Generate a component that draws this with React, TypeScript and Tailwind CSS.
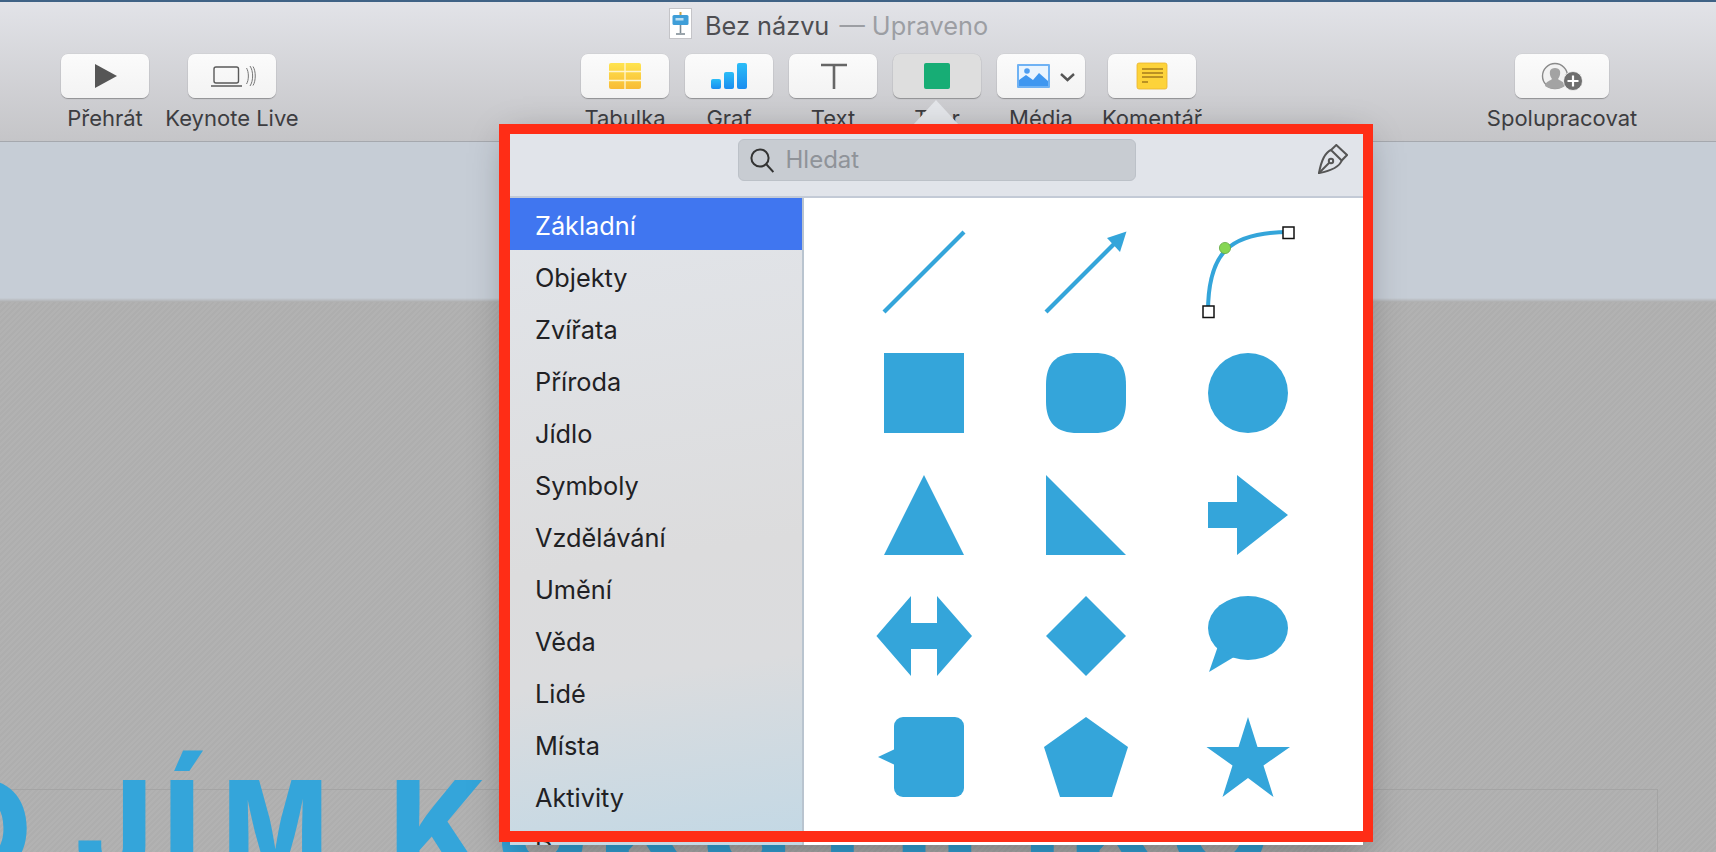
import React from "react";

const BLUE = "#34a5da";

function ToolButton({ label, width = "w-[88px]", active = false, vb = "0 0 88 44", children, className = "" }: { label: string; width?: string; active?: boolean; vb?: string; children: React.ReactNode; className?: string }) {
  return (
    <div className={`flex flex-col items-center ${width} ${className}`}>
      <div className={`h-[44px] w-full rounded-[7px] shadow-[0_1px_1px_rgba(0,0,0,0.28),0_0_0_0.5px_rgba(0,0,0,0.06)] ${active ? "bg-[#dedede]" : "bg-gradient-to-b from-[#fbfbfb] to-[#f3f3f3]"}`}>
        <svg viewBox={vb} className="block h-full w-full">{children}</svg>
      </div>
      <div className="mt-[7px] whitespace-nowrap text-[22px] leading-[26px] text-[#3d3d41]">{label}</div>
    </div>
  );
}

function Shape({ children }: { children: React.ReactNode }) {
  return (
    <div className="flex items-center justify-center">
      <svg viewBox="0 0 100 100" className="block h-[100px] w-[100px]" fill={BLUE}>{children}</svg>
    </div>
  );
}

const categories = ["Objekty", "Zvířata", "Příroda", "Jídlo", "Symboly", "Vzdělávání", "Umění", "Věda", "Lidé", "Místa", "Aktivity", "Doprava"];

export default function App() {
  return (
    <div className="relative flex h-[852px] w-[1716px] flex-col overflow-hidden bg-[#c6cdd6] font-['Inter',sans-serif]">
      <div className="h-[2px] bg-[#3f6285]" />
      <header className="h-[140px] border-b border-[#a5a8ae] bg-gradient-to-b from-[#e2e3e8] to-[#c5c5c8]">
        <div className="flex h-[52px] items-start pl-[669px] pt-[6px]">
          <svg viewBox="0 0 23 31" className="h-[31px] w-[23px]">
            <rect x="0.5" y="0.5" width="22" height="30" fill="#fff" stroke="#c4c4c8" />
            <rect x="3.5" y="7" width="16" height="10" rx="1.5" fill="#3f9ed8" />
            <rect x="6.5" y="10" width="8" height="2.5" fill="#bfe0f2" />
            <rect x="10.5" y="4" width="2" height="3" fill="#c9a24a" />
            <path d="M11.5 17V25" stroke="#7c8a94" strokeWidth="1.6" />
            <path d="M7 26h9" stroke="#9aa4ab" strokeWidth="2" />
          </svg>
          <div className="ml-[13px] whitespace-nowrap text-[25.3px] leading-[36px] text-[#4e4e52]">
            Bez názvu <span className="ml-[3px] text-[#9c9ea3]">— Upraveno</span>
          </div>
        </div>
        <div className="flex pl-[61px]">
          <ToolButton label="Přehrát">
            <path d="M34 10V34L56 22Z" fill="#565656" />
          </ToolButton>
          <ToolButton label="Keynote Live" className="ml-[39px]">
            <rect x="26" y="13" width="24.5" height="16" rx="2" fill="none" stroke="#5a5a5a" strokeWidth="1.4" />
            <path d="M23 32H54" stroke="#5a5a5a" strokeWidth="1.5" />
            <path d="M58.5 14C61 18 61 26 58.5 30M62 12C65.5 17 65.5 27 62 32M65 12.5C68 17 68 27 65 31.5" fill="none" stroke="#777" strokeWidth="1" />
          </ToolButton>
          <div className="ml-[305px] flex gap-4">
            <ToolButton label="Tabulka">
              <defs>
                <linearGradient id="ty" x1="0" y1="0" x2="0" y2="1">
                  <stop offset="0" stopColor="#ffe44f" />
                  <stop offset="1" stopColor="#f8bb35" />
                </linearGradient>
              </defs>
              <rect x="28" y="9" width="32" height="26" rx="2" fill="url(#ty)" />
              <path d="M44 9V35M28 17.5H60M28 26.5H60" stroke="#fff6d0" strokeWidth="1.3" />
            </ToolButton>
            <ToolButton label="Graf">
              <defs>
                <linearGradient id="tb" x1="0" y1="0" x2="0" y2="1">
                  <stop offset="0" stopColor="#2bbdf7" />
                  <stop offset="1" stopColor="#1a8df0" />
                </linearGradient>
              </defs>
              <rect x="26" y="25" width="10" height="10" rx="2" fill="url(#tb)" />
              <rect x="39" y="18" width="10" height="17" rx="2" fill="url(#tb)" />
              <rect x="52" y="9" width="10" height="26" rx="2" fill="url(#tb)" />
            </ToolButton>
            <ToolButton label="Text">
              <path d="M32 11H58M45 11V35" stroke="#666" strokeWidth="2.6" fill="none" />
            </ToolButton>
            <ToolButton label="Tvar" active>
              <rect x="31" y="9" width="26" height="26" rx="2" fill="#17ad75" />
            </ToolButton>
            <ToolButton label="Média">
              <rect x="20" y="10" width="33" height="24" rx="1" fill="#6fb2f4" />
              <rect x="22" y="12" width="29" height="20" fill="#e9f4fe" />
              <circle cx="30" cy="17" r="2.8" fill="#4d9df0" />
              <path d="M22 32V26L29 21L36 26L42 19L51 27V32Z" fill="#3f97f0" />
              <path d="M64 20L70.5 26L77 20" fill="none" stroke="#555" strokeWidth="2.4" />
            </ToolButton>
            <ToolButton label="Komentář" className="ml-[7px]">
              <rect x="29" y="9" width="30" height="26" rx="2" fill="#fdd33a" stroke="#eab42c" strokeWidth="0.8" />
              <path d="M34 15H55M34 19H55M34 23H55" stroke="#a57c1c" strokeWidth="1.5" />
              <path d="M34 28H40" stroke="#a57c1c" strokeWidth="1.5" />
            </ToolButton>
          </div>
          <ToolButton label="Spolupracovat" width="w-[94px]" vb="0 0 94 44" className="ml-[319px]">
            <circle cx="40" cy="22" r="12.5" fill="#f2f2f2" stroke="#8a8a8a" strokeWidth="1.4" />
            <path d="M30 32C31 27 35 27 37 25C35 22 34.5 20 35 17C36 13 44 13 45 17C45.5 20 45 22 43 25C45 27 49 27 50 32C45 36 35 36 30 32Z" fill="#a3a3a3" />
            <circle cx="58" cy="27" r="9.5" fill="#6f6f6f" stroke="#f6f6f6" strokeWidth="0.8" />
            <path d="M58 21.5V32.5M52.5 27H63.5" stroke="#fff" strokeWidth="2.2" />
          </ToolButton>
        </div>
      </header>

      <div className="h-[156px] bg-[#c6cdd6]" />
      <div className="h-[4px] bg-gradient-to-b from-[#c6cdd6] to-[#aeaeae]" />

      <main className="relative flex-1 overflow-hidden bg-[repeating-linear-gradient(135deg,#b2b2b2_0px,#b2b2b2_2px,#aeaeae_2px,#aeaeae_4px)]">
        <div className="absolute left-[-40px] top-[487px] h-[200px] w-[1698px] border border-[#a4a4a4]" />
        <div className="absolute left-[-70px] top-[441px] whitespace-nowrap text-[132px] font-extrabold leading-[170px] tracking-[-2px] text-[#34a5da]">
          O<span className="ml-[45px]">J</span><span className="ml-[12px]">Í</span><span className="ml-[24px] inline-block origin-left scale-x-[0.84]">M</span><span className="ml-[44px] tracking-[8px]">KUKSTILIKO</span>
        </div>
      </main>

      {/* Caret of the popover */}
      <svg viewBox="0 0 48 26" className="absolute left-[912px] top-[99px] h-[26px] w-[48px]">
        <path d="M24 1L47 26H1Z" fill="#e4e6ea" />
      </svg>

      {/* Popover */}
      <div className="absolute left-[510px] top-[134px] flex h-[711px] w-[853px] flex-col overflow-hidden bg-white shadow-[0_6px_36px_rgba(0,0,0,0.35)]">
        <div className="flex h-[64px] shrink-0 items-start border-b-2 border-[#c3cad6] bg-[#e1e4ea] pt-[5px]">
          <div className="flex-1" />
          <div className="flex h-[42px] w-[398px] items-center rounded-[6px] border border-[#bcc1c8] bg-[#c8ccd2] pl-[11px]">
            <svg viewBox="0 0 24 25" className="h-[25px] w-[24px]" fill="none" stroke="#333" strokeWidth="2">
              <circle cx="10" cy="10" r="8.6" />
              <path d="M16.3 16.3L23.4 24" />
            </svg>
            <span className="ml-[12px] text-[24px] leading-none text-[#8f9399]">Hledat</span>
          </div>
          <div className="flex flex-1 justify-end">
            <svg viewBox="0 0 30 30" className="mr-[15px] mt-[5px] h-[30px] w-[30px]" fill="none" stroke="#555" strokeWidth="2">
              <path d="M18.3 1L29 11L23.7 16.5L13 6Z" />
              <path d="M13 6C6 9 3 18 1 29C12 27 21 24 23.7 16.5" />
              <path d="M1 29L11 19" />
              <circle cx="13" cy="17" r="2.2" />
            </svg>
          </div>
        </div>
        <div className="flex min-h-0 flex-1">
          <nav className="w-[294px] shrink-0 overflow-hidden border-r-2 border-[#b9c4cf] bg-[linear-gradient(172deg,#e2e5ea_0%,#dcdcdd_55%,#dbdcde_72%,#c2d8e5_100%)] text-[25.3px] text-[#212124]">
            <div className="flex h-[52px] items-center bg-[#4076f0] pl-[25px] pt-[3px] text-white">Základní</div>
            {categories.map((c) => (
              <div key={c} className="flex h-[52px] items-center pl-[25px] pt-[3px]">{c}</div>
            ))}
          </nav>
          <div className="grid flex-1 auto-rows-[121.33px] grid-cols-[repeat(3,162px)] content-start pl-[39px] pt-[13.3px]">
            <Shape><path d="M10 90L90 10" stroke={BLUE} strokeWidth="4.2" /></Shape>
            <Shape>
              <path d="M10 90L82 18" stroke={BLUE} strokeWidth="4.2" />
              <path d="M90.5 9.5L71 16L84 30Z" />
            </Shape>
            <Shape>
              <path d="M10 90C10 32 30 10 91 10" fill="none" stroke={BLUE} strokeWidth="4" />
              <circle cx="27" cy="26" r="5.6" fill="#86d653" stroke="#64a845" strokeWidth="0.8" />
              <rect x="5" y="84" width="11" height="11.5" fill="#fff" stroke="#111" strokeWidth="1.5" />
              <rect x="85" y="5" width="11" height="11.5" fill="#fff" stroke="#111" strokeWidth="1.5" />
            </Shape>
            <Shape><rect x="10" y="10" width="80" height="80" /></Shape>
            <Shape><path d="M42 10H58C80 10 90 20 90 42V58C90 80 80 90 58 90H42C20 90 10 80 10 58V42C10 20 20 10 42 10Z" /></Shape>
            <Shape><circle cx="50" cy="50" r="40" /></Shape>
            <Shape><path d="M50 10L90 90H10Z" /></Shape>
            <Shape><path d="M10 10L90 90H10Z" /></Shape>
            <Shape><path d="M10 37H39V10L90 50L39 90V63H10Z" /></Shape>
            <Shape><path d="M2.4 50L37 10V37H63V10L98 50L63 90V63H37V90Z" /></Shape>
            <Shape><path d="M50 10L90 50L50 90L10 50Z" /></Shape>
            <Shape>
              <ellipse cx="50" cy="42" rx="40" ry="32" />
              <path d="M20 60L11 86L36 71Z" />
            </Shape>
            <Shape>
              <rect x="20" y="10" width="70" height="80" rx="9" />
              <path d="M4 50L21 42V58Z" />
            </Shape>
            <Shape><path d="M50 10L92 40L76 90H24L8 40Z" /></Shape>
            <Shape><path d="M50 10L59.5 40H92L65.5 58.5L75.5 90L50 71L24.5 90L34.5 58.5L8.5 40H40.5Z" /></Shape>
          </div>
        </div>
      </div>

      {/* Red annotation frame */}
      <div className="absolute left-[499px] top-[124px] h-[718px] w-[874px] border-[10px] border-b-[11px] border-l-[11px] border-[#ff2d16]" />
    </div>
  );
}
